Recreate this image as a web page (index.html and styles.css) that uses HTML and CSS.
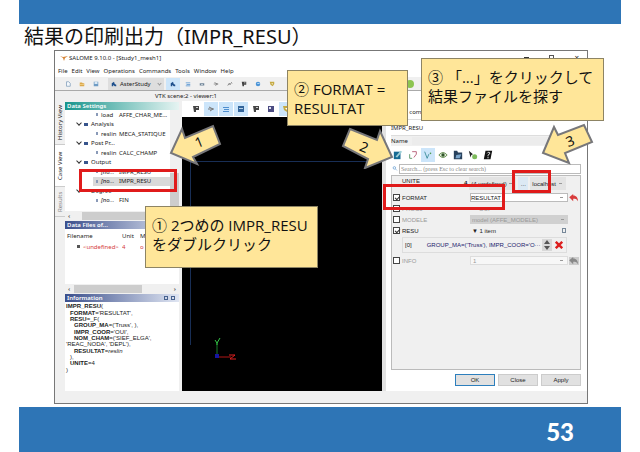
FILE: index.html
```html
<!DOCTYPE html>
<html lang="ja">
<head>
    <meta charset="UTF-8">
    <meta name="viewport" content="width=device-width, initial-scale=1.0">
    <title>結果の印刷出力（IMPR_RESU）</title>
    <link rel="stylesheet" href="styles.css">
</head>
<body>
    <svg class="defs" aria-hidden="true">
        <symbol id="doc" viewBox="0 0 8 8"><path d="M2 1h3l2 2v4H2z" fill="#f4f8fc" stroke="#7f9cba"/></symbol>
        <symbol id="folder" viewBox="0 0 8 8"><path d="M1 2h3l1 1h2v4H1z" fill="#dba84c"/><path d="M1 4h6v1H1z" fill="#f3d48a"/></symbol>
        <symbol id="disk" viewBox="0 0 8 8"><path d="M1 1h6v6H1z" fill="#6f9cc4"/><path d="M2 1h4v3H2z" fill="#dbe9f5"/></symbol>
        <symbol id="aster" viewBox="0 0 8 8"><path d="M1 3l3-2 1 3 2 1v2H5L3 5v2H1z" fill="#1d4f8c"/></symbol>
        <symbol id="mesh" viewBox="0 0 8 8"><path d="M1 2h6v1H1zM2 4h5v1H2zM1 6h6v1H1z" fill="#4f8fd0"/></symbol>
        <symbol id="box" viewBox="0 0 8 8"><path d="M1 3h6v3H1z" fill="#6f8498"/><path d="M3 4h2v1H3z" fill="#fff"/></symbol>
        <symbol id="node" viewBox="0 0 8 8"><path d="M2 2l4 2-3 2M1 4h6" fill="none" stroke="#777"/></symbol>
        <symbol id="wave" viewBox="0 0 8 8"><path d="M1 6l2-3 1 2 2-3 1 1" fill="none" stroke="#666"/></symbol>
        <symbol id="flag" viewBox="0 0 8 8"><path d="M1 1h6v4H4v2H2z" fill="#444"/><path d="M4 2h2v1H4z" fill="#ccc"/></symbol>
        <symbol id="globe" viewBox="0 0 8 8"><circle cx="4" cy="4" r="3" fill="#4c95d8"/><path d="M3 3h3v1H3z" fill="#d8ecfa"/></symbol>
        <symbol id="gold" viewBox="0 0 8 8"><path d="M1 1h6v3L5 7 2 5z" fill="#c5aa42"/><path d="M3 3h2v2z" fill="#fff"/></symbol>
        <symbol id="cube" viewBox="0 0 8 8"><path d="M1 1h6v6H1z" fill="#33659b"/><path d="M2 3h4v1H2z" fill="#b9d2e8"/></symbol>
        <symbol id="chart" viewBox="0 0 8 8"><path d="M1 1h6v6H1z" fill="#4c4c82"/><path d="M2 2h2v2H2z" fill="#e5e5f3"/></symbol>
        <symbol id="undo" viewBox="0 0 12 10"><path d="M5 0v2c4 0 6 3 6 7-2-3-3-3-6-3v3L0 4z" fill="currentColor"/></symbol>
    </svg>

    <div class="slide">
        <div class="band"></div>
        <h1>結果の印刷出力（IMPR_RESU）</h1>

        <div class="window">
            <div class="titlebar">
                <svg class="logo" viewBox="0 0 8 6"><path d="M0 1l3 1 5-1-3 2-1 3-1-3z" fill="#d78435"/></svg>
                <span>SALOME 9.10.0 - [Study1_mesh1]</span>
                <div class="controls"><i class="min"></i><i class="max"></i><b>×</b></div>
            </div>
            <nav class="menubar">
                <span>File</span><span>Edit</span><span>View</span><span>Operations</span><span>Commands</span><span>Tools</span><span>Window</span><span>Help</span>
            </nav>
            <div class="toolbar">
                <svg><use href="#doc"/></svg>
                <svg><use href="#folder"/></svg>
                <svg><use href="#disk"/></svg>
                <div class="module"><svg><use href="#aster"/></svg><span>AsterStudy</span><i class="caret"></i></div>
                <svg class="on"><use href="#aster"/></svg>
                <svg><use href="#mesh"/></svg>
                <svg><use href="#box"/></svg>
                <svg><use href="#node"/></svg>
                <svg><use href="#wave"/></svg>
                <svg><use href="#flag"/></svg>
                <svg><use href="#globe"/></svg>
                <svg><use href="#gold"/></svg>
                <svg class="run" viewBox="0 0 8 8"><circle cx="4" cy="4" r="4" fill="#8cc450"/></svg>
            </div>

            <div class="body">
                <div class="workspace">
                    <div class="viewname">VTK scene:2 - viewer:1</div>
                    <div class="panes">
                        <div class="sidetabs">
                            <span class="history">History View</span>
                            <span class="case">Case View</span>
                            <span class="results">Results</span>
                        </div>
                        <div class="dock">
                            <h2 class="teal">Data Settings</h2>
                            <div class="tree">
                                <ul>
                                    <li class="leaf"><span>load</span><span>AFFE_CHAR_ME...</span></li>
                                    <li class="group">Analysis</li>
                                    <li class="leaf"><span>reslin</span><span>MECA_STATIQUE</span></li>
                                    <li class="group">Post Pr...</li>
                                    <li class="leaf"><span>reslin</span><span>CALC_CHAMP</span></li>
                                    <li class="group">Output</li>
                                    <li class="leaf"><em>[no...</em><span>IMPR_RESU</span></li>
                                    <li class="leaf selected"><em>[no...</em><span>IMPR_RESU</span></li>
                                    <li class="group">Degree</li>
                                    <li class="leaf"><em>[no...</em><span>FIN</span></li>
                                </ul>
                                <div class="vscroll"><i></i></div>
                            </div>
                            <div class="hscroll"><b>‹</b><i></i></div>
                            <h2>Data Files of...</h2>
                            <div class="files">
                                <table>
                                    <tr><th>Filename</th><th>Unit</th><th>M</th></tr>
                                    <tr class="missing"><td>&lt;undefined&gt;</td><td>4</td><td>o</td></tr>
                                </table>
                            </div>
                            <div class="hscroll short"><b>‹</b><i></i><b>›</b></div>
                            <h2 class="info-head">Information<span><i></i><i></i></span></h2>
                            <div class="info">
                                <div><b>IMPR_RESU</b>(</div>
                                <div class="in1"><b>FORMAT</b>='RESULTAT',</div>
                                <div class="in1"><b>RESU</b>=_F(</div>
                                <div class="in2"><b>GROUP_MA</b>=('Truss', ),</div>
                                <div class="in2"><b>IMPR_COOR</b>='OUI',</div>
                                <div class="in2"><b>NOM_CHAM</b>=('SIEF_ELGA',</div>
                                <div>'REAC_NODA', 'DEPL'),</div>
                                <div class="in2"><b>RESULTAT</b>=<em>reslin</em></div>
                                <div class="in1">),</div>
                                <div class="in1"><b>UNITE</b>=4</div>
                                <div>)</div>
                            </div>
                        </div>
                        <div class="viewer">
                            <div class="viewtools">
                                <svg><use href="#flag"/></svg>
                                <svg class="on"><use href="#node"/></svg>
                                <svg class="on"><use href="#mesh"/></svg>
                                <svg class="on"><use href="#cube"/></svg>
                                <svg><use href="#flag"/></svg>
                                <svg><use href="#chart"/></svg>
                                <svg class="on"><use href="#gold"/></svg>
                            </div>
                            <div class="scene">
                                <div class="frame"></div>
                                <svg class="axes" viewBox="0 0 24 24">
                                    <path d="M4 20V5" stroke="#187a28"/>
                                    <path d="M2 3l2 3 3-5M4 6v2" stroke="#35c748" fill="none"/>
                                    <path d="M4 20h14" stroke="#b01616"/>
                                    <path d="M16 18h6l-5 4h6" stroke="#e02020" fill="none"/>
                                    <path d="M2 17h4v4H2z" fill="#1616a0"/>
                                </svg>
                            </div>
                        </div>
                    </div>
                </div>

                <form class="editor" onsubmit="return false">
                    <div class="editor-title">Edit command</div>
                    <div class="command">IMPR_RESU</div>
                    <div class="name"><label for="name">Name</label><input type="text" id="name"></div>
                    <div class="actions">
                        <svg viewBox="0 0 12 12"><path d="M1 2h8v9H1z" fill="#176b94"/><path d="M3 8l6-7 2 1-6 7z" fill="#9ed0d8"/></svg>
                        <svg viewBox="0 0 12 12"><path d="M2 5v5h3" fill="none" stroke="#4a8c58"/><path d="M5 2h5v3L7 9" fill="none" stroke="#b04c68"/></svg>
                        <svg class="on" viewBox="0 0 12 12"><path d="M2 2l3 8 2-5" fill="none" stroke="#348894"/><circle cx="9" cy="4" r="1" fill="#4d9950"/></svg>
                        <svg viewBox="0 0 12 12"><path d="M1 6q5-6 10 0-5 6-10 0z" fill="#e1efd9" stroke="#55813e"/><circle cx="6" cy="6" r="2" fill="#31542a"/></svg>
                        <svg viewBox="0 0 12 12"><path d="M1 1h4l1 2h5v8H1z" fill="#28415c"/><path d="M4 6l6-1-2 5H3z" fill="#7aa5cb"/></svg>
                        <svg viewBox="0 0 12 12"><path d="M1 1l5 4-2 1-1 3z" fill="#222"/><circle cx="8" cy="8" r="3" fill="#7dbb5c"/></svg>
                        <svg viewBox="0 0 12 12"><path d="M3 1h8l-2 10H1z" fill="#111"/><path d="M5 4q1-2 3-1 1 2-2 3v1M6 8v2" stroke="#fff" fill="none"/></svg>
                    </div>
                    <div class="search">
                        <svg viewBox="0 0 8 8"><circle cx="3" cy="3" r="2" fill="none" stroke="#4a8cc8"/><path d="M5 5l2 2" stroke="#4a8cc8"/></svg>
                        <input type="text" aria-label="Search" placeholder="Search... (press Esc to clear search)">
                    </div>
                    <div class="fields">
                        <div class="row unite">
                            <span></span><span>UNITE</span>
                            <div class="unit-controls">
                                <b>4</b>
                                <select aria-label="Unit"><option>(4 undefined)</option></select>
                                <button type="button">...</button>
                                <select aria-label="Host"><option>localhost</option></select>
                            </div>
                        </div>
                        <div class="row">
                            <input type="checkbox" id="format" checked><label for="format">FORMAT</label>
                            <select class="white" aria-label="Format value"><option>RESULTAT</option></select>
                            <svg class="undo"><use href="#undo"/></svg>
                        </div>
                        <div class="row off">
                            <input type="checkbox" id="proc0"><label for="proc0">PROC0</label><span class="oui">OUI</span>
                        </div>
                        <div class="row off">
                            <input type="checkbox" id="modele"><label for="modele">MODELE</label>
                            <select class="grey" aria-label="Model value"><option>model (AFFE_MODELE)</option></select>
                        </div>
                        <div class="row">
                            <input type="checkbox" id="resu" checked><label for="resu">RESU</label>
                            <div class="items"><span>▼ 1 item</span><i class="add"></i></div>
                        </div>
                        <div class="item">
                            <span>[0]</span>
                            <span class="value">GROUP_MA=('Truss'), IMPR_COOR='O···</span>
                            <svg class="spin" viewBox="0 0 10 12"><path d="M0 0h10v12H0z" fill="#d8d8d8"/><path d="M2 5l3-4 3 4zM2 7l3 4 3-4z" fill="#555"/></svg>
                            <svg class="remove" viewBox="0 0 10 10"><path d="M1 1l8 8M9 1L1 9" stroke="#dc1e1e" stroke-width="3"/></svg>
                        </div>
                        <div class="row off">
                            <input type="checkbox" id="info"><label for="info">INFO</label>
                            <select class="pale" aria-label="Info value"><option>1</option></select>
                            <svg class="undo dim"><use href="#undo"/></svg>
                        </div>
                    </div>
                    <div class="buttons">
                        <button type="button" class="default">OK</button>
                        <button type="button">Close</button>
                        <button type="button">Apply</button>
                    </div>
                </form>
            </div>
            <div class="statusbar"></div>
        </div>

        <footer>53</footer>

        <!-- annotations over the window -->
        <div class="mark mark-tree"></div>
        <div class="mark mark-format"></div>
        <div class="mark mark-browse"></div>

        <svg class="arrow arrow1" viewBox="0 0 54 44">
            <path d="M2 29L13 5l3 9 28-12 7 18-27 13 4 7z"/>
            <text x="30" y="23" transform="rotate(-22 30 18)">1</text>
        </svg>
        <svg class="arrow arrow2" viewBox="0 0 54 44">
            <path d="M9 4l27 11 3-9 12 26-27 11 3-9L2 21z"/>
            <text x="23" y="27" transform="rotate(22 23 22)">2</text>
        </svg>
        <svg class="arrow arrow3" viewBox="0 0 54 44">
            <path d="M2 30L13 4l4 8L43 2l8 17-27 11 4 10z"/>
            <text x="29" y="23" transform="rotate(-22 29 18)">3</text>
        </svg>

        <div class="callout step1">① 2つめの IMPR_RESU<br>をダブルクリック</div>
        <div class="callout step2">② FORMAT =<br>RESULTAT</div>
        <div class="callout step3">③ 「...」をクリックして<br>結果ファイルを探す</div>
    </div>
</body>
</html>
```
FILE: styles.css
```css
* {
    box-sizing: border-box;
}
body {
    margin: 0;
    background: #fff;
    color: #222;
    font-family: "Noto Sans", "Noto Sans CJK JP", sans-serif;
    font-size: 6px;
    line-height: 8px;
}
svg {
    display: block;
    flex: none;
    width: 8px;
    height: 8px;
}
.defs {
    position: absolute;
    width: 0;
    height: 0;
}
input, select, button {
    font: inherit;
    color: inherit;
    margin: 0;
    padding: 0;
    border: 0;
    border-radius: 0;
    min-width: 0;
}
ul {
    list-style: none;
    margin: 0;
    padding: 0;
}

/* slide */
.slide {
    position: relative;
    display: flex;
    flex-direction: column;
    min-height: 100vh;
    padding: 0 19px;
}
.band {
    height: 24px;
    background: #2e75b6;
}
h1 {
    margin: 0;
    padding-left: 5px;
    height: 26px;
    font-size: 20px;
    font-weight: 400;
    line-height: 26px;
    color: #111;
    white-space: nowrap;
}
footer {
    height: 45px;
    margin-top: 3px;
    padding-right: 47px;
    background: #2e75b6;
    color: #fff;
    font-family: Lato, sans-serif;
    font-size: 24px;
    font-weight: 900;
    line-height: 50px;
    text-align: right;
}

/* application window */
.window {
    flex: 1;
    display: flex;
    flex-direction: column;
    margin: 0 33px 0 35px;
    border: 1px solid #777;
    background: #f0f0f0;
}
.titlebar {
    display: flex;
    align-items: center;
    height: 13px;
    padding: 0 8px 0 5px;
    background: #fff;
}
.logo {
    height: 6px;
    margin-right: 1px;
}
.controls {
    display: flex;
    align-items: center;
    gap: 20px;
    margin-left: auto;
    font-size: 8px;
}
.controls b {
    font-weight: 400;
}
.min {
    width: 5px;
    border-top: 1px solid #333;
}
.max {
    width: 5px;
    height: 5px;
    border: 1px solid #555;
}
.menubar {
    display: flex;
    align-items: center;
    gap: 4px;
    height: 13px;
    padding-left: 3px;
    background: #fff;
}
.toolbar {
    display: flex;
    align-items: center;
    gap: 2px;
    height: 14px;
    padding-left: 7px;
    border-bottom: 1px solid #aaa;
}
.toolbar > svg {
    width: 12px;
    height: 12px;
    padding: 3px;
}
.toolbar > .on {
    width: 14px;
}
.on {
    background: #cce5fa;
}
.toolbar > .run {
    padding: 2px;
    margin: 0 171px 0 auto;
}
.module {
    display: flex;
    align-items: center;
    gap: 3px;
    width: 56px;
    height: 12px;
    margin: 0 0 0 4px;
    padding: 0 3px;
    background: #dedede;
}
.module svg {
    width: 6px;
}
.caret {
    width: 3px;
    height: 3px;
    margin-left: auto;
    border: solid #999;
    border-width: 0 1px 1px 0;
    transform: rotate(45deg);
}
.body {
    flex: 1;
    display: flex;
}
.workspace {
    flex: 1;
    display: flex;
    flex-direction: column;
    min-width: 0;
}
.viewname {
    height: 10px;
    padding-left: 100px;
    line-height: 11px;
}
.panes {
    flex: 1;
    display: flex;
}
.statusbar {
    height: 12px;
}

/* vertical tabs */
.sidetabs {
    width: 10px;
}
.sidetabs span {
    display: block;
    width: 10px;
    line-height: 10px;
    text-align: center;
    writing-mode: vertical-rl;
    transform: rotate(180deg);
    border-top: 1px solid #ccc;
}
.history {
    height: 44px;
}
.case {
    height: 42px;
    background: #fff;
}
.results {
    height: 30px;
    color: #888;
}

/* left dock */
.dock {
    display: flex;
    flex-direction: column;
    width: 117px;
    padding: 0 3px 0 0;
}
h2 {
    margin: 1px 0 0;
    padding-left: 2px;
    height: 8px;
    background: linear-gradient(90deg, #3b4f8c, #dfe5f2);
    color: #fff;
    font-size: 6px;
    font-weight: 600;
    line-height: 8px;
}
h2.teal {
    background: linear-gradient(90deg, #17958c, #e6f4f2);
}
.tree {
    display: flex;
    height: 101px;
    background: #fff;
}
.tree ul {
    flex: 1;
    display: grid;
    grid-auto-rows: 1fr;
    height: 95px;
    min-width: 0;
}
.tree li {
    display: flex;
    align-items: center;
    white-space: nowrap;
}
.leaf::before {
    content: "";
    width: 2px;
    height: 3px;
    margin: 0 3px 0 31px;
    background: #8a9ab8;
}
.leaf > :first-child {
    width: 18px;
}
.leaf.selected {
    background: linear-gradient(90deg, #fff 28px, #d9d9d9 28px);
}
.group {
    background: linear-gradient(#37558c, #37558c) 19px 3px / 4px 3px no-repeat;
}
.group::before {
    content: "";
    width: 3px;
    height: 3px;
    margin: -2px 10px 0 12px;
    border: solid #333;
    border-width: 0 1px 1px 0;
    transform: rotate(45deg);
}
.vscroll {
    display: flex;
    align-items: flex-end;
    width: 9px;
    background: #f0f0f0;
}
.vscroll i {
    width: 9px;
    height: 38px;
    background: #cdcdcd;
}
.hscroll {
    display: flex;
    align-items: center;
    justify-content: space-between;
    height: 9px;
    padding: 0 3px;
    background: #f0f0f0;
    color: #555;
}
.hscroll i {
    flex: 1;
    height: 8px;
    margin-left: 12px;
    background: #cdcdcd;
}
.hscroll.short i {
    margin: 0 32px 0 4px;
}
.files {
    height: 55px;
    padding-top: 1px;
    background: #fff;
}
.files table {
    width: 100%;
    border-collapse: collapse;
    table-layout: fixed;
}
.files th, .files td {
    height: 11px;
    padding: 0;
    overflow: hidden;
    font-weight: 400;
    text-align: left;
    white-space: nowrap;
}
.files th:first-child {
    width: 57px;
    padding-left: 2px;
}
.files th:nth-child(2) {
    width: 18px;
}
.missing {
    color: #d53b3b;
}
.missing td:first-child {
    padding-left: 12px;
}
.missing td:first-child::before {
    content: "";
    display: inline-block;
    width: 3px;
    height: 3px;
    margin: 0 3px 1px 0;
    background: #555;
}
.info-head {
    display: flex;
    justify-content: space-between;
}
.info-head span {
    display: flex;
    gap: 3px;
    padding: 2px 4px 0 0;
}
.info-head i {
    width: 4px;
    height: 4px;
    border: 1px solid #47628e;
}
.info {
    flex: 1;
    display: grid;
    grid-auto-rows: 1fr;
    align-items: center;
    padding: 1px 0 18px 1px;
    background: #fff;
    font-family: "Liberation Sans", sans-serif;
    line-height: 6px;
}
.in1 {
    padding-left: 4px;
}
.in2 {
    padding-left: 8px;
}

/* 3D view */
.viewer {
    flex: 1;
    display: flex;
    flex-direction: column;
}
.viewtools {
    display: flex;
    align-items: center;
    gap: 1px;
    height: 16px;
    padding-left: 7px;
    background: #fff;
}
.viewtools svg {
    width: 14px;
    height: 14px;
    padding: 3px;
}
.scene {
    position: relative;
    flex: 1;
    background: #000;
}
.frame {
    position: absolute;
    left: 8px;
    right: 0;
    top: 44px;
    bottom: 46px;
    border: solid #182e55;
    border-width: 1px 0 0 1px;
}
.axes {
    position: absolute;
    left: 31px;
    bottom: 30px;
    width: 24px;
    height: 24px;
}

/* command editor */
.editor {
    display: flex;
    flex-direction: column;
    width: 205px;
    padding: 0 6px 4px 5px;
    border-left: 4px solid #e2e2e2;
    background: #fff;
}
.editor-title {
    height: 28px;
    padding: 17px 0 0 6px;
}
.command {
    height: 17px;
    padding-top: 4px;
    border-top: 1px solid #ddd;
    border-bottom: 1px solid #ddd;
}
.name {
    display: flex;
    align-items: center;
    height: 10px;
    background: #f0f0f0;
}
.name input {
    flex: 1;
    height: 8px;
    margin-left: 4px;
    background: #ececec;
}
.actions {
    display: flex;
    align-items: center;
    gap: 1px;
    height: 17px;
}
.actions svg {
    width: 14px;
    height: 14px;
    padding: 2px;
}
.search {
    display: flex;
    align-items: center;
    height: 11px;
}
.search svg {
    height: 5px;
}
.search input {
    flex: 1;
    height: 10px;
    padding-left: 1px;
    border: 1px solid #bbb;
    font-family: "Liberation Serif", serif;
}
.search input::placeholder {
    color: #888;
}
.fields {
    flex: 1;
    margin-top: 1px;
    padding: 1px 0;
    border: 1px solid #bbb;
    background: #f0f0f0;
    font-family: "Liberation Sans", sans-serif;
}
.row {
    display: grid;
    grid-template-columns: 9px 67px 1fr 10px;
    column-gap: 1px;
    align-items: center;
    height: 11px;
    padding: 0 1px 0 0;
}
.row.unite {
    align-items: start;
    height: 15px;
}
.unit-controls {
    grid-column: 3 / 5;
    display: flex;
    gap: 2px;
    margin-left: -6px;
}
.unit-controls b {
    line-height: 12px;
}
.unit-controls select:first-of-type {
    width: 47px;
}
.unit-controls button {
    width: 10px;
    height: 13px;
    background: #dce9f4;
}
.unit-controls select:last-of-type {
    width: 36px;
}
select {
    appearance: none;
    height: 13px;
    padding-left: 2px;
    background: #e3e3e3 linear-gradient(#999, #999) no-repeat right 4px center / 3px 1px;
}
.row > select {
    height: 9px;
}
select.white {
    background-color: #fff;
    border: 1px solid #bbb;
    padding-left: 0;
}
select.grey {
    background-color: #d0d0d0;
}
select.pale {
    background-color: #f7f7f7;
    border: 1px solid #ddd;
}
input[type="checkbox"] {
    appearance: none;
    width: 7px;
    height: 7px;
    margin-left: 1px;
    border: 1px solid #444;
    background: #fff;
}
input[type="checkbox"]:checked::before {
    content: "";
    display: block;
    width: 4px;
    height: 2px;
    margin: 1px 0 0 1px;
    border: solid #333;
    border-width: 0 0 1px 1px;
    transform: rotate(-45deg);
}
.off {
    color: #999;
}
.undo {
    width: 10px;
    color: #d83b3b;
}
.undo.dim {
    background: #ccc;
    color: #888;
}
.oui {
    padding-left: 9px;
}
.items {
    display: flex;
    justify-content: space-between;
    align-items: center;
    padding: 0 2px;
}
.add {
    width: 4px;
    height: 5px;
    border: 1px solid #789;
}
.item {
    display: flex;
    align-items: center;
    height: 16px;
    margin: 1px 13px 2px 10px;
    padding: 0 3px 0 2px;
    border: 1px solid #ddd;
}
.item .value {
    flex: 1;
    min-width: 0;
    margin-left: 15px;
    color: #22226c;
    white-space: nowrap;
}
.spin {
    width: 10px;
    height: 12px;
    margin-right: 3px;
}
.buttons {
    display: flex;
    justify-content: flex-end;
    gap: 3px;
    height: 12px;
    margin: 4px 0 1px;
}
.buttons button {
    width: 40px;
    border: 1px solid #ccc;
    background: #e1e1e1;
    font-family: "Liberation Sans", sans-serif;
}
.buttons .default {
    border-color: #2d7fbd;
}

/* annotations */
.mark {
    position: absolute;
    border: 3px solid #e01b1b;
}
.mark-tree {
    left: 79px;
    top: 169px;
    width: 98px;
    height: 23px;
}
.mark-format {
    right: 135px;
    top: 184px;
    width: 122px;
    height: 26px;
}
.mark-browse {
    right: 89px;
    top: 170px;
    width: 39px;
    height: 23px;
}
.callout {
    position: absolute;
    padding: 9px 6px;
    border: 1px solid #8d8464;
    background: #ffe699;
    color: #111;
    font-family: "Open Sans", "Noto Sans CJK JP", sans-serif;
    font-size: 15px;
    line-height: 19px;
    white-space: nowrap;
}
.step1 {
    left: 145px;
    top: 206px;
    width: 173px;
    height: 62px;
}
.step2 {
    right: 232px;
    top: 70px;
    width: 121px;
    height: 56px;
}
.step3 {
    right: 36px;
    top: 58px;
    width: 183px;
    height: 63px;
}
.arrow {
    position: absolute;
    width: 54px;
    height: 44px;
}
.arrow path {
    fill: #ffe699;
    stroke: #77777a;
    stroke-width: 2;
}
.arrow text {
    fill: #111;
    font-size: 14px;
    text-anchor: middle;
}
.arrow1 {
    left: 169px;
    top: 124px;
}
.arrow2 {
    right: 245px;
    top: 125px;
}
.arrow3 {
    right: 45px;
    top: 123px;
}
```
